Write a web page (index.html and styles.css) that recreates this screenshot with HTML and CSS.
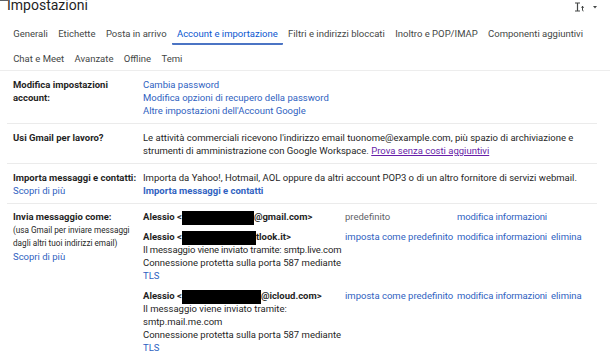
FILE: index.html
```html
<!DOCTYPE html>
<html lang="it">
<head>
<meta charset="utf-8">
<title>Impostazioni</title>
<link rel="stylesheet" href="styles.css">
</head>
<body>
<div class="page">
  <header class="topbar">
    <h1 class="title">Impostazioni</h1>
    <div class="input-tools">
      <svg width="26" height="10" viewBox="0 0 26 10" aria-hidden="true">
        <path d="M1 1h5M3.5 1v8M1 9h5" stroke="#444746" stroke-width="1.2" fill="none"/>
        <path d="M8.5 4v4.2c0 .6.4.8 1 .8M7.3 5.3h2.6" stroke="#444746" stroke-width="1" fill="none"/>
        <path d="M19 4h4l-2 2.4z" fill="#444746"/>
      </svg>
    </div>
  </header>
  <nav class="tabs">
    <div class="tab-row">
      <span class="tab">Generali</span>
      <span class="tab">Etichette</span>
      <span class="tab">Posta in arrivo</span>
      <span class="tab active">Account e importazione</span>
      <span class="tab">Filtri e indirizzi bloccati</span>
      <span class="tab">Inoltro e POP/IMAP</span>
      <span class="tab">Componenti aggiuntivi</span>
    </div>
    <div class="tab-row">
      <span class="tab">Chat e Meet</span>
      <span class="tab">Avanzate</span>
      <span class="tab">Offline</span>
      <span class="tab">Temi</span>
    </div>
  </nav>
  <main class="settings">
    <section class="row">
      <div class="label"><b>Modifica impostazioni account:</b></div>
      <div class="value">
        <div><a class="link">Cambia password</a></div>
        <div><a class="link">Modifica opzioni di recupero della password</a></div>
        <div><a class="link">Altre impostazioni dell'Account Google</a></div>
      </div>
    </section>
    <section class="row">
      <div class="label"><b>Usi Gmail per lavoro?</b></div>
      <div class="value">Le attività commerciali ricevono l'indirizzo email tuonome@example.com, più spazio di archiviazione e strumenti di amministrazione con Google Workspace. <a class="visited">Prova senza costi aggiuntivi</a></div>
    </section>
    <section class="row">
      <div class="label nowrap"><b>Importa messaggi e contatti:</b><div><a class="link">Scopri di più</a></div></div>
      <div class="value">
        <div>Importa da Yahoo!, Hotmail, AOL oppure da altri account POP3 o di un altro fornitore di servizi webmail.</div>
        <div><a class="link strong">Importa messaggi e contatti</a></div>
      </div>
    </section>
    <section class="row last">
      <div class="label">
        <b>Invia messaggio come:</b>
        <div class="small">(usa Gmail per inviare messaggi dagli altri tuoi indirizzi email)</div>
        <div><a class="link">Scopri di più</a></div>
      </div>
      <div class="value">
        <div class="sender first">
          <div class="addr"><b>Alessio &lt;<span class="redact"></span>@gmail.com&gt;</b></div>
          <div class="status muted">predefinito</div>
          <div class="edit"><a class="link">modifica informazioni</a></div>
          <div class="del"></div>
        </div>
        <div class="sender">
          <div class="addr"><b>Alessio &lt;<span class="redact r2"></span>tlook.it&gt;</b><div class="tight">Il messaggio viene inviato tramite: smtp.live.com</div><div>Connessione protetta sulla porta 587 mediante</div><div class="tls">TLS</div></div>
          <div class="status"><a class="link">imposta come predefinito</a></div>
          <div class="edit"><a class="link">modifica informazioni</a></div>
          <div class="del"><a class="link">elimina</a></div>
        </div>
        <div class="sender">
          <div class="addr"><b>Alessio &lt;<span class="redact r3"></span>@icloud.com&gt;</b><div>Il messaggio viene inviato tramite: smtp.mail.me.com</div><div>Connessione protetta sulla porta 587 mediante</div><div class="tls">TLS</div></div>
          <div class="status"><a class="link">imposta come predefinito</a></div>
          <div class="edit"><a class="link">modifica informazioni</a></div>
          <div class="del"><a class="link">elimina</a></div>
        </div>
      </div>
    </section>
  </main>
</div>
</body>
</html>
```
FILE: styles.css
```css
* { box-sizing: border-box; }
html, body { margin: 0; padding: 0; background: #ffffff; }
body {
  font-family: Roboto, "Liberation Sans", Arial, sans-serif;
  color: #1f1f1f;
  font-size: 9.5px;
  line-height: 13px;
  overflow: hidden;
  height: 353px;
}
.page { width: 610px; }
.topbar {
  display: flex;
  align-items: flex-start;
  justify-content: space-between;
  height: 20px;
  padding: 0 8px 0 7px;
  position: relative;
}
.topbar::before {
  content: "";
  position: absolute;
  left: 0; top: 0;
  width: 8px; height: 1px;
  background: #5f6368;
}
.title {
  margin: -3px 0 0 0;
  font-size: 14px;
  line-height: 16px;
  font-weight: 400;
  color: #1f1f1f;
}
.input-tools { padding-top: 2px; margin-right: 2px; }
.tabs {
  padding: 0 0 0 8px;
  border-bottom: 1px solid #ededed;
}
.tab-row { display: flex; }
.tab {
  color: #444746;
  padding: 7px 5.2px 3px 5.2px;
  font-size: 9.5px;
  line-height: 13px;
  border-bottom: 2px solid transparent;
}
.tab.active {
  color: #0b57d0;
  border-bottom-color: #4b74c4;
  border-radius: 1px;
}
.settings { padding: 0 13px 0 7px; }
.row {
  display: flex;
  padding: 7px 0 6px 6px;
  border-bottom: 1px solid #ebebeb;
}
.row.last { border-bottom: none; padding-top: 6px; }
.label { width: 130px; flex: none; }
.label.nowrap { white-space: nowrap; }
.label b { font-weight: 700; color: #1f1f1f; }
.value { flex: 1; }
.link { color: #2f62c1; text-decoration: none; }
.link.strong { font-weight: 700; }
.visited { color: #681da8; text-decoration: underline; }
.small { font-size: 8.2px; line-height: 13px; margin-top: 1px; }
.muted { color: #5f6368; }
.sender { display: flex; padding-top: 7px; }
.sender.first { padding-top: 0; }
.addr { width: 202px; flex: none; }
.addr b { font-weight: 700; }
.addr .tight { white-space: nowrap; letter-spacing: -0.15px; }
.status { width: 112px; flex: none; white-space: nowrap; }
.edit { width: 94px; flex: none; white-space: nowrap; letter-spacing: -0.12px; }
.del { flex: 1; white-space: nowrap; }
.tls { color: #2f62c1; }
.redact {
  display: inline-block;
  width: 72px;
  height: 14px;
  margin: -2px 0;
  background: #000;
  vertical-align: -3px;
}
.redact.r2 { width: 74px; }
.redact.r3 { width: 79px; }
```
